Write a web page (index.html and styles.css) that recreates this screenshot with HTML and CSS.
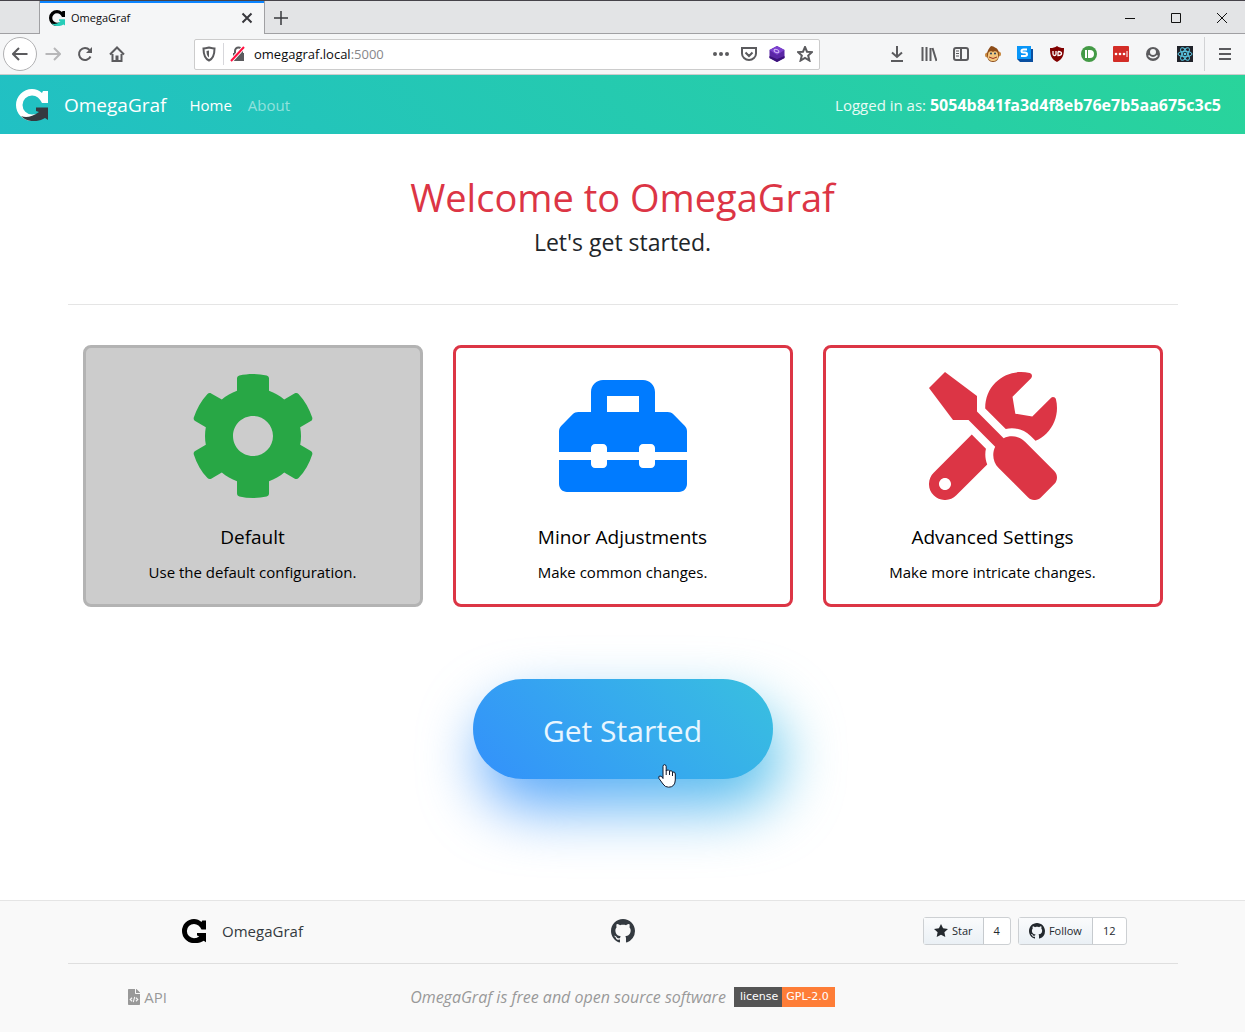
FILE: index.html
```html
<!DOCTYPE html>
<html lang="en">
<head>
<meta charset="utf-8">
<title>OmegaGraf</title>
<meta name="viewport" content="width=device-width, initial-scale=1">
<link rel="stylesheet" href="styles.css">
</head>
<body>
<svg class="sprite" aria-hidden="true">
  <symbol id="logo" viewBox="0 0 32 32">
    <path fill="var(--logo-main)" d="M32 2V14H26C24 9.500 20.500 6.500 16 6.500A9.500 9.500 0 0 0 16 25.500L21 25L16 32A16 16 0 0 1 16 0C20 0 23 1.500 26 4L27 2Z"/>
    <path fill="var(--logo-arrow)" d="M20 18.500H32V31L29 29C22 33.500 11 33.500 5 27C10 29 16 28 23 23L20 22Z"/>
  </symbol>
  <symbol id="github" viewBox="0 0 16 16">
    <path fill="currentColor" d="M8 0C3.58 0 0 3.58 0 8c0 3.54 2.29 6.53 5.47 7.59.4.07.55-.17.55-.38 0-.19-.01-.82-.01-1.49-2.01.37-2.53-.49-2.69-.94-.09-.23-.48-.94-.82-1.13-.28-.15-.68-.52-.01-.53.63-.01 1.08.58 1.23.82.72 1.21 1.87.87 2.33.66.07-.52.28-.87.51-1.07-1.78-.2-3.64-.89-3.64-3.95 0-.87.31-1.59.82-2.15-.08-.2-.36-1.02.08-2.12 0 0 .67-.21 2.2.82.64-.18 1.32-.27 2-.27.68 0 1.36.09 2 .27 1.53-1.04 2.2-.82 2.2-.82.44 1.1.16 1.92.08 2.12.51.56.82 1.27.82 2.15 0 3.07-1.87 3.75-3.65 3.95.29.25.54.73.54 1.48 0 1.07-.01 1.93-.01 2.2 0 .21.15.46.55.38A8.013 8.013 0 0 0 16 8c0-4.42-3.58-8-8-8z"/>
  </symbol>
</svg>

<div class="browser">
  <div class="tabs">
    <div class="tab">
      <svg class="i16 logo-tab"><use href="#logo"/></svg>
      <span class="tab-title">OmegaGraf</span>
      <button class="tab-btn" aria-label="Close tab"><svg class="i16 line" viewBox="0 0 16 16"><path d="M3.500 3.500l9 9M12.500 3.500l-9 9"/></svg></button>
    </div>
    <button class="tab-btn new-tab" aria-label="New tab"><svg class="i16 line" viewBox="0 0 16 16"><path d="M8 1v14M1 8h14"/></svg></button>
    <div class="window-controls">
      <button aria-label="Minimize"><svg class="i16" viewBox="0 0 16 16"><path d="M3 8.500h10"/></svg></button>
      <button aria-label="Maximize"><svg class="i16" viewBox="0 0 16 16"><path d="M3.500 3.500h9v9h-9z"/></svg></button>
      <button aria-label="Close window"><svg class="i16" viewBox="0 0 16 16"><path d="M3 3l10 10M13 3L3 13"/></svg></button>
    </div>
  </div>
  <div class="toolbar">
    <div class="tools">
      <button class="back" aria-label="Back"><svg class="i16 line" viewBox="0 0 16 16"><path d="M15.500 8H1M7 2L1 8l6 6"/></svg></button>
      <button class="dim" aria-label="Forward"><svg class="i16 line" viewBox="0 0 16 16"><path d="M.5 8H15M9 2l6 6-6 6"/></svg></button>
      <button aria-label="Reload"><svg class="i16 line" viewBox="0 0 16 16"><path d="M13.500 10.500A6 6 0 1 1 12.500 4"/><path class="solid" d="M15 1v6H9z"/></svg></button>
      <button aria-label="Home"><svg class="i16 line" viewBox="0 0 16 16"><path d="M1 8.500L8 1.500l7 7M3.500 8v7h9V8"/><path class="solid" d="M6.500 9.500h3V15h-3z"/></svg></button>
    </div>
    <div class="urlbar">
      <button aria-label="Tracking protection"><svg class="i16 line" viewBox="0 0 16 16"><path d="M8 1.500C6 2 4 2.500 2.500 2.500c0 6 1 10 5.500 12 4.500-2 5.500-6 5.500-12C12 2.500 10 2 8 1.500z"/><path class="solid" d="M8 4.500v7C6 10 5.500 8 5.500 5z"/></svg></button>
      <span class="url-sep"></span>
      <button aria-label="Connection not secure"><svg class="i16 line" viewBox="0 0 16 16"><path class="solid" d="M3 7h11v8H3z"/><path d="M5 8V5a3.500 3.500 0 0 1 7 0v3"/><path stroke="#fff" stroke-width="4" d="M1 15L14 1"/><path stroke="#ff0f3f" d="M1 15L14 1"/></svg></button>
      <div class="url" role="textbox" aria-label="Address">omegagraf.local<span class="port">:5000</span></div>
      <div class="url-actions">
        <button aria-label="Page actions"><svg class="i16" viewBox="0 0 16 16"><g fill="#5b5b5e"><circle cx="2" cy="8" r="2"/><circle cx="8" cy="8" r="2"/><circle cx="14" cy="8" r="2"/></g></svg></button>
        <button aria-label="Save to Pocket"><svg class="i16 line" viewBox="0 0 16 16"><path d="M1 2h14v5.500a7 6.500 0 0 1-14 0zM4.500 6.500L8 10l3.500-3.500"/></svg></button>
        <button aria-label="Extension"><svg class="i16" viewBox="0 0 16 16"><path fill="#5a27a5" d="M8 0l7.500 4v8L8 16 .5 12V4z"/><path fill="#7c40cf" d="M8 0l7.500 4L8 9 .5 4z"/><path fill="#3b127a" d="M.5 10L8 13l7.500-3v2L8 16 .5 12z"/><ellipse cx="7.500" cy="5" rx="2.500" ry="1.500" fill="none" stroke="#d4bbf5" transform="rotate(25 7.500 5)"/></svg></button>
        <button aria-label="Bookmark"><svg class="i16 line" viewBox="0 0 16 16"><path d="M8 1l2 4.700 5 .4-3.800 3.400 1.200 5L8 11.800l-4.400 2.700 1.200-5L1 6.100l5-.4z"/></svg></button>
      </div>
    </div>
    <div class="tools">
      <button aria-label="Downloads"><svg class="i16 line" viewBox="0 0 16 16"><path d="M8 0v11M3 6.500L8 11l5-4.500M2 15h12"/></svg></button>
      <button aria-label="Library"><svg class="i16 line" viewBox="0 0 16 16"><path d="M1.500 1v14M5.500 1v14M9.500 2v13M11.500 2L15.500 15"/></svg></button>
      <button aria-label="Sidebar"><svg class="i16 line" viewBox="0 0 16 16"><rect x="1" y="2" width="14" height="12" rx="2"/><path stroke-width="1" d="M3 5h3M3 7.500h3M3 10h3"/><path d="M8 2v12"/></svg></button>
      <button aria-label="Monkey"><svg class="i16" viewBox="0 0 16 16"><circle cx="2.500" cy="9" r="2.500" fill="#c78840"/><circle cx="13.500" cy="8" r="2.500" fill="#c78840"/><path fill="#8d4c18" d="M6 0c2 0 3 1 4 1.500 3 1 4 4 4 7C14 13 12 16 8 16s-6-3-6-7.500C2 5 4 2 6 0z"/><path fill="#f2c67e" d="M3 9c0-5 4-4 5-3 1-1 5-2 5 3 1 4-2 6-5 6s-6-2-5-6z"/><circle cx="6" cy="7.500" r="1" fill="#24405c"/><circle cx="10" cy="7.500" r="1" fill="#24405c"/><path fill="none" stroke="#9c3420" d="M4 11q4 3 8 0"/></svg></button>
      <button aria-label="Stylus"><svg class="i16" viewBox="0 0 16 16"><path fill="#0a4fa0" d="M3 3h13v13H3L0 13z"/><path fill="#0996f8" d="M0 0h14v13H0z"/><path fill="none" stroke="#fff" stroke-width="2" d="M10 3.500H6.500q-2 0-2 1.500t2 1.500H8q2 0 2 1.700T8 10H4"/></svg></button>
      <button aria-label="Ad blocker"><svg class="i16" viewBox="0 0 16 16"><path fill="#800000" d="M8 0c2 1.500 4 2 7 2 0 7-1 11-7 14C2 13 1 9 1 2c3 0 5-.5 7-2z"/><path fill="none" stroke="#fff" stroke-width="1.300" d="M4 5v3q0 1.500 1.500 1.500T7 8V5M9 5.500v4q3.500 0 3.500-2T9 5.500"/></svg></button>
      <button aria-label="Green extension"><svg class="i16" viewBox="0 0 16 16"><circle cx="8" cy="8" r="8" fill="#439a46"/><path fill="#fff" d="M4 4h2v8H4zM7 4h2a4 4 0 0 1 0 8H7z"/></svg></button>
      <button aria-label="Password manager"><svg class="i16" viewBox="0 0 16 16"><rect width="16" height="16" rx="1" fill="#d32d27"/><g fill="#fff"><circle cx="3" cy="8" r="1.300"/><circle cx="7" cy="8" r="1.300"/><circle cx="11" cy="8" r="1.300"/><path d="M13.500 5h1v6h-1z"/></g></svg></button>
      <button aria-label="Account"><svg class="i16" viewBox="0 0 16 16"><circle cx="8" cy="8" r="7" fill="#5b5b5e"/><circle cx="8" cy="6" r="3" fill="#f5f6f7"/><path fill="none" stroke="#f5f6f7" stroke-width="1.500" d="M3.500 9.500q4.500 4.500 9 0"/></svg></button>
      <button aria-label="React tools"><svg class="i16" viewBox="0 0 16 16"><rect width="16" height="16" fill="#20232a"/><g fill="none" stroke="#5ccbe8"><ellipse cx="8" cy="8" rx="7" ry="2.700"/><ellipse cx="8" cy="8" rx="7" ry="2.700" transform="rotate(60 8 8)"/><ellipse cx="8" cy="8" rx="7" ry="2.700" transform="rotate(120 8 8)"/></g><circle cx="8" cy="8" r="1.300" fill="#5ccbe8"/></svg></button>
      <span class="tool-sep"></span>
      <button class="menu" aria-label="Menu"><svg class="i16 line" viewBox="0 0 16 16"><path d="M2 3h12M2 8h12M2 13h12"/></svg></button>
    </div>
  </div>
</div>

<header class="navbar">
  <a class="brand" href="#"><svg class="i32 logo-nav"><use href="#logo"/></svg>OmegaGraf</a>
  <nav class="nav-links">
    <a href="#">Home</a>
    <a class="muted" href="#">About</a>
  </nav>
  <p class="login">Logged in as: <b>5054b841fa3d4f8eb76e7b5aa675c3c5</b></p>
</header>

<main class="container">
  <div class="intro">
    <h1>Welcome to OmegaGraf</h1>
    <p>Let's get started.</p>
  </div>
  <div class="cards">
    <button class="card selected" aria-pressed="true">
      <svg class="card-icon green" viewBox="0 0 512 512"><path d="M487.400 315.700l-42.600-24.600c4.300-23.200 4.300-47 0-70.200l42.600-24.600c4.900-2.800 7.100-8.600 5.500-14-11.100-35.600-30-67.800-54.700-94.600-3.800-4.100-10-5.100-14.800-2.300L380.800 110c-17.900-15.400-38.500-27.300-60.800-35.100V25.800c0-5.600-3.900-10.500-9.400-11.700-36.700-8.200-74.300-7.800-109.200 0-5.500 1.200-9.400 6.100-9.400 11.700V75c-22.200 7.900-42.800 19.800-60.800 35.100L88.700 85.500c-4.900-2.800-11-1.900-14.800 2.300-24.700 26.700-43.600 58.900-54.700 94.600-1.700 5.400.6 11.200 5.500 14L67.300 221c-4.300 23.200-4.300 47 0 70.200l-42.600 24.600c-4.900 2.800-7.100 8.600-5.500 14 11.100 35.600 30 67.800 54.700 94.600 3.800 4.100 10 5.100 14.800 2.300l42.600-24.600c17.900 15.400 38.500 27.300 60.800 35.100v49.200c0 5.600 3.900 10.500 9.400 11.700 36.700 8.200 74.300 7.800 109.200 0 5.500-1.200 9.400-6.100 9.400-11.700v-49.200c22.200-7.900 42.800-19.800 60.800-35.100l42.600 24.600c4.900 2.800 11 1.900 14.800-2.300 24.700-26.700 43.600-58.900 54.700-94.600 1.500-5.500-.7-11.300-5.600-14.100zM256 336c-44.100 0-80-35.900-80-80s35.900-80 80-80 80 35.900 80 80-35.900 80-80 80z"/></svg>
      <span class="card-title">Default</span>
      <span class="card-text">Use the default configuration.</span>
    </button>
    <button class="card" aria-pressed="false">
      <svg class="card-icon blue" viewBox="0 0 512 512"><path d="M502.630 214.630l-45.250-45.250c-6-6-14.140-9.370-22.630-9.370H384V80c0-26.510-21.490-48-48-48H176c-26.510 0-48 21.490-48 48v80H77.250c-8.490 0-16.620 3.370-22.630 9.370L9.370 214.630c-6 6-9.370 14.140-9.370 22.630V320h128v-16c0-8.840 7.160-16 16-16h32c8.840 0 16 7.160 16 16v16h128v-16c0-8.840 7.160-16 16-16h32c8.840 0 16 7.160 16 16v16h128v-82.750c0-8.480-3.370-16.620-9.370-22.620zM320 160H192V96h128v64zm64 208c0 8.840-7.160 16-16 16h-32c-8.840 0-16-7.160-16-16v-16H192v16c0 8.840-7.160 16-16 16h-32c-8.840 0-16-7.160-16-16v-16H0v96c0 17.670 14.330 32 32 32h448c17.670 0 32-14.330 32-32v-96H384v16z"/></svg>
      <span class="card-title">Minor Adjustments</span>
      <span class="card-text">Make common changes.</span>
    </button>
    <button class="card" aria-pressed="false">
      <svg class="card-icon red" viewBox="0 0 512 512"><path d="M501.100 395.700L384 278.600c-23.100-23.100-57.600-27.600-85.400-13.900L192 158.100V96L64 0 0 64l96 128h62.100l106.600 106.600c-13.600 27.800-9.200 62.300 13.900 85.400l117.100 117.100c14.600 14.600 38.200 14.600 52.700 0l52.700-52.700c14.500-14.600 14.500-38.200 0-52.700zM331.700 225c28.300 0 54.900 11 74.900 31l19.400 19.400c15.800-6.900 30.800-16.500 43.800-29.500 37.100-37.100 49.700-89.300 37.900-136.700-2.200-9-13.500-12.100-20.100-5.500l-74.400 74.400-67.900-11.300L334 98.900l74.400-74.400c6.600-6.600 3.400-17.900-5.700-20.200-47.400-11.700-99.600.9-136.600 37.900-28.500 28.500-41.900 66.100-41.200 103.600l82.100 82.100c8.100-1.900 16.500-2.900 24.700-2.900zm-103.900 82l-56.700-56.700L18.700 402.800c-25 25-25 65.500 0 90.500s65.500 25 90.500 0l123.600-123.600c-7.600-19.900-9.900-41.600-5-62.700zM64 472c-13.200 0-24-10.800-24-24 0-13.300 10.700-24 24-24s24 10.700 24 24c0 13.200-10.700 24-24 24z"/></svg>
      <span class="card-title">Advanced Settings</span>
      <span class="card-text">Make more intricate changes.</span>
    </button>
  </div>
  <div class="start">
    <button class="start-btn">Get Started</button>
    <svg class="pointer" viewBox="0 0 18 24" aria-hidden="true"><path d="M5 2.500Q5 .7 6.500 .7T8.200 2.500V6.500Q11 5 11.500 7 14 6 14.500 8 17.300 7.500 17.300 10V16Q17 23.200 10.500 23.200 7 23.200 5 20L1 14.500Q0 12 2 12T5 14.500Z"/><path d="M8.200 6v5M11.500 7v4M14.500 8v4"/></svg>
  </div>
</main>

<footer class="footer">
  <div class="container">
    <div class="foot-top">
      <a class="foot-brand" href="#"><svg class="i24 logo-foot"><use href="#logo"/></svg>OmegaGraf</a>
      <a class="foot-git" href="#" aria-label="GitHub"><svg class="i24"><use href="#github"/></svg></a>
      <div class="social">
        <div class="pair">
          <a class="gh-btn" href="#"><svg class="i14" viewBox="0 0 14 16"><path fill="currentColor" d="M14 6l-4.900-.640L7 1 4.900 5.360 0 6l3.600 3.260L2.670 14 7 11.670 11.330 14l-.930-4.740z"/></svg>Star</a><a class="gh-count" href="#">4</a>
        </div>
        <div class="pair">
          <a class="gh-btn" href="#"><svg class="i16"><use href="#github"/></svg>Follow</a><a class="gh-count" href="#">12</a>
        </div>
      </div>
    </div>
    <div class="foot-bottom">
      <a class="api" href="#"><svg class="api-icon" viewBox="0 0 384 512"><path fill="currentColor" d="M384 122v6H256V0h6c6 0 12 2 17 7l98 98c5 5 7 11 7 17zM248 160c-13 0-24-11-24-24V0H24C11 0 0 11 0 24v464c0 13 11 24 24 24h336c13 0 24-11 24-24V160H248z"/><path fill="none" stroke="#f9f9f9" stroke-width="34" d="M130 280l-60 56 60 56M254 280l60 56-60 56M215 250l-46 172"/></svg>API</a>
      <p class="tagline"><em>OmegaGraf is free and open source software</em><a class="license" href="#"><span>license</span><span class="gpl">GPL-2.0</span></a></p>
    </div>
  </div>
</footer>
</body>
</html>
```
FILE: styles.css
```css
* { box-sizing: border-box; }
body {
  margin: 0;
  background: #fff;
  color: #212529;
  font: 15px/24px "Open Sans", "Noto Sans", sans-serif;
}
button { font: inherit; color: inherit; border: 0; padding: 0; background: none; cursor: pointer; }
a { color: inherit; text-decoration: none; }
h1, p { margin: 0; }
svg { flex: none; display: block; }
.sprite { position: absolute; width: 0; height: 0; }
.i14 { width: 14px; height: 16px; }
.i16 { width: 16px; height: 16px; }
.i24 { width: 24px; height: 24px; }
.i32 { width: 32px; height: 32px; }
.logo-tab { --logo-main: #000; --logo-arrow: #27cdb9; }
.logo-nav { --logo-main: #fff; --logo-arrow: #343a40; }
.logo-foot { --logo-main: #000; --logo-arrow: #000; }
.line { fill: none; stroke: #5b5b5e; stroke-width: 2; }
.line .solid { fill: #5b5b5e; stroke: none; }

/* Browser window */
.browser { background: #f5f6f7; border-top: 1px solid #46434a; border-bottom: 1px solid #ccc; font-size: 12px; }
.tabs { display: flex; height: 33px; padding-left: 39px; background: #e3e4e6; box-shadow: inset 0 -1px #a0a0a3; }
.tab {
  display: flex; align-items: center; gap: 6px; width: 226px; padding: 0 9px;
  background: #f5f6f7; border: solid #a0a0a3; border-width: 0 1px; box-shadow: inset 0 2px #0a84ff; color: #0c0c0d;
}
.tab-title { flex: 1; font-size: 11px; }
.tab-btn .line { stroke: #38383d; }
.new-tab { margin-left: 8px; }
.new-tab .line { stroke-width: 1.5; }
.window-controls { display: flex; margin-left: auto; }
.window-controls button { display: grid; place-items: center; width: 46px; }
.window-controls svg { fill: none; stroke: #111; }
.toolbar { display: flex; align-items: center; gap: 61px; height: 40px; padding-left: 3px; }
.tools { display: flex; align-items: center; }
.tools button { display: grid; place-items: center; width: 32px; height: 34px; }
.tools .back { width: 34px; border: 1px solid #b1b1b3; border-radius: 50%; background: #fff; }
.tools .dim { opacity: .4; }
.tools .menu { width: 40px; }
.tool-sep { width: 1px; height: 34px; margin-left: 3px; background: #d2d3d5; }
.urlbar {
  display: flex; flex: 1; align-items: center; height: 31px; padding: 0 6px;
  background: #fff; border: 1px solid #ccc; border-radius: 2px;
}
.url-sep { width: 1px; height: 22px; margin: 0 6px; background: #d7d7db; }
.url { flex: 1; padding-left: 8px; font-size: 13px; color: #0c0c0d; }
.port { color: #87878a; }
.url-actions { display: flex; gap: 12px; }

/* Site navigation */
.navbar {
  display: flex; align-items: center; min-height: 59px; padding: 0 24px 0 16px;
  background: linear-gradient(45deg, #21c0c4, #29d49b); color: #fff;
}
.brand { display: flex; align-items: center; gap: 16px; font-size: 19px; }
.nav-links { display: flex; gap: 16px; margin-left: 23px; }
.nav-links .muted { color: rgba(255, 255, 255, .5); }
.login { margin-left: auto; color: #e8fbf5; }
.login b { color: #fff; font-size: 16px; }

/* Welcome */
.container { max-width: 1140px; margin: 0 auto; padding: 0 15px; }
.intro { padding: 39px 0 47px; border-bottom: 1px solid #e5e5e5; text-align: center; }
.intro h1 { font-size: 38px; font-weight: 400; line-height: 48px; color: #dc3545; }
.intro p { padding-top: 6px; font-size: 23px; line-height: 30px; }
.cards { display: grid; grid-template-columns: repeat(3, 1fr); gap: 30px; padding: 40px 15px 72px; }
.card {
  display: flex; flex-direction: column; align-items: center; padding: 24px 16px 20px;
  border: 3px solid #dc3545; border-radius: 8px; color: #000;
}
.card.selected { background: #ccc; border-color: #b3b3b3; }
.card-icon { width: 128px; height: 128px; margin-bottom: 25px; fill: currentColor; }
.green { color: #28a745; }
.blue { color: #007bff; }
.red { color: #dc3545; }
.card-title { margin-bottom: 11px; font-size: 19px; }
.start { position: relative; width: 300px; margin: 0 auto 121px; }
.start-btn {
  display: block; width: 100%; height: 100px; padding-top: 4px; border-radius: 50px;
  background: linear-gradient(45deg, #3390fb, #36abed 55%, #39c0df); color: #e8f6ff; font-size: 30px;
}
.start::before {
  content: ""; position: absolute; z-index: -1; inset: 28px -8px -28px 8px; border-radius: 50px;
  background: linear-gradient(45deg, #5a9eff, #56c9e6); filter: blur(30px);
}
.pointer { position: absolute; left: 185px; top: 85px; width: 18px; height: 24px; fill: #fff; stroke: #10182c; pointer-events: none; }

/* Footer */
.footer { margin-bottom: 3px; background: #f9f9f9; border-top: 1px solid #e5e5e5; }
.foot-top { display: grid; grid-template-columns: repeat(3, 1fr); align-items: center; height: 63px; padding-bottom: 2px; border-bottom: 1px solid #dfdfdf; }
.foot-brand { display: flex; justify-content: center; align-items: center; gap: 16px; padding-right: 20px; color: #343a40; }
.foot-git { justify-self: center; color: #343a40; }
.social { display: flex; justify-content: flex-end; gap: 7px; padding-right: 51px; font-size: 11px; font-weight: 500; line-height: 26px; }
.pair { display: flex; border: 1px solid #cdd0d3; border-radius: 3px; background: #fff; color: #24292e; }
.gh-btn { display: flex; align-items: center; gap: 4px; padding: 0 10px; border-right: 1px solid #c6cace; background: linear-gradient(#fafbfc, #eaf0f5); }
.gh-count { padding: 0 10px; }
.foot-bottom { display: grid; grid-template-columns: 160px 1fr 160px; align-items: center; height: 68px; padding-bottom: 2px; color: #999; }
.api { display: flex; justify-content: center; align-items: center; gap: 4px; }
.api-icon { width: 12px; height: 16px; }
.tagline { display: flex; justify-content: center; align-items: center; gap: 8px; font-size: 16px; }
.license { display: flex; background: #555; color: #fff; font: 11px/20px "DejaVu Sans", sans-serif; }
.license span { padding: 0 4px 0 6px; }
.license .gpl { padding: 0 6px 0 4px; background: #fe7d37; }
```
